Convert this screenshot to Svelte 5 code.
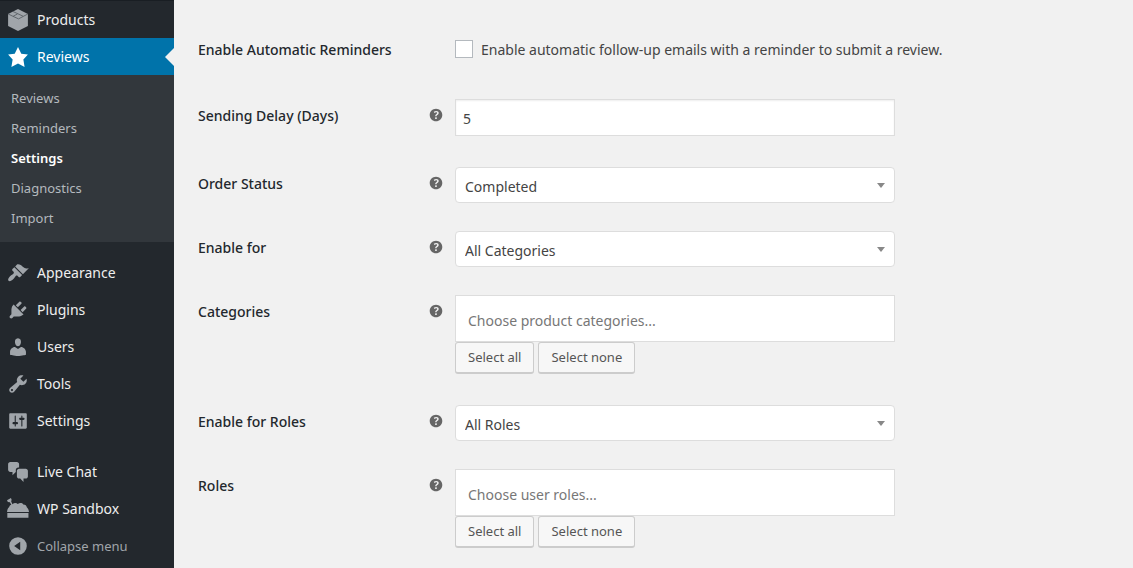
<script lang="ts">
	interface MenuItem {
		label: string;
		icon: string;
	}

	interface Field {
		id: string;
		label: string;
		type: 'number' | 'single' | 'multi';
		value?: string;
		placeholder?: string;
	}

	const icons: Record<string, string> = {
		box: 'M10 0l9 4.5v11L10 20l-9-4.500v-11z',
		star: 'M10 1l3 6 6 .75-4.12 4.620L16 19l-6-3-6 3 1.130-6.630L1 7.750 7 7z',
		appearance:
			'M14.48 11.06L7.41 3.99l1.5-1.5c.5-.56 2.3-.47 3.51.32 1.21.8 1.43 1.28 2.91 2.1 1.18.64 2.45 1.26 4.45.85zm-.71.71L6.7 4.7 4.93 6.47c-.39.39-.39 1.02 0 1.41l1.06 1.06c.39.39.39 1.03 0 1.42-.6.6-1.43 1.11-2.21 1.69-.35.26-.7.53-1.01.84C1.43 14.23.4 16.08 1.4 17.07c.99 1 2.84-.03 4.18-1.36.31-.31.58-.66.85-1.02.57-.78 1.08-1.61 1.69-2.21.39-.39 1.02-.39 1.41 0l1.06 1.06c.39.39 1.02.39 1.41 0z',
		plugins:
			'M13.11 4.36L9.87 7.6 8 5.73l3.24-3.24c.35-.34 1.05-.2 1.56.32.52.51.66 1.21.31 1.55zm-8 1.77l.91-1.12 9.01 9.01-1.19.84c-.71.71-2.63 1.16-3.82 1.16H6.14L4.9 17.26c-.59.59-1.54.59-2.12 0-.59-.58-.59-1.53 0-2.12l1.24-1.24v-3.88c0-1.13.4-3.19 1.09-3.89zm7.26 3.97l3.24-3.24c.34-.35 1.04-.21 1.55.31.52.51.66 1.21.31 1.55l-3.24 3.25z',
		users:
			'M10 9.25c-2.27 0-2.73-3.44-2.73-3.44C7 4.02 7.82 2 9.97 2c2.16 0 2.98 2.02 2.71 3.81 0 0-.41 3.44-2.68 3.44zm0 2.57L12.72 10c2.39 0 4.52 2.33 4.52 4.53v2.49s-3.65 1.13-7.24 1.13c-3.65 0-7.24-1.13-7.24-1.13v-2.49c0-2.25 1.94-4.48 4.47-4.48z',
		tools:
			'M16.68 9.77c-1.34 1.34-3.3 1.67-4.95.99l-5.41 6.52c-.99.99-2.59.99-3.58 0s-.99-2.59 0-3.57l6.52-5.42c-.68-1.65-.35-3.61.99-4.95 1.28-1.28 3.12-1.62 4.72-1.06l-2.89 2.89 2.82 2.82 2.86-2.87c.53 1.58.18 3.39-1.08 4.65zM3.81 16.21c.4.39 1.04.39 1.43 0 .4-.4.4-1.04 0-1.43-.39-.4-1.03-.4-1.43 0-.39.39-.39 1.03 0 1.43z',
		settings:
			'M18 16V4c0-.55-.45-1-1-1H3c-.55 0-1 .45-1 1v12c0 .55.45 1 1 1h14c.55 0 1-.45 1-1zM8 11h1c.55 0 1 .45 1 1s-.45 1-1 1H8v1.5c0 .28-.22.5-.5.5s-.5-.22-.5-.5V13H6c-.55 0-1-.45-1-1s.45-1 1-1h1V5.5c0-.28.22-.5.5-.5s.5.22.5.5V11zm5-2h-1c-.55 0-1-.45-1-1s.45-1 1-1h1V5.5c0-.28.22-.5.5-.5s.5.22.5.5V7h1c.55 0 1 .45 1 1s-.45 1-1 1h-1v5.5c0 .28-.22.5-.5.5s-.5-.22-.5-.5V9z',
		chat: 'M11 6h-.82C9.07 6 8 7.2 8 8.16V10l-3 3v-3H3c-1.1 0-2-.9-2-2V3c0-1.1.9-2 2-2h6c1.1 0 2 .9 2 2v3zm0 1h6c1.1 0 2 .9 2 2v5c0 1.1-.9 2-2 2h-2v3l-3-3h-1c-1.1 0-2-.9-2-2V9c0-1.1.9-2 2-2z',
		sandbox:
			'M0 2L3.600 0 4.200 1.500 3.800 3.200 5 5.600C6.200 4.400 8.500 4.200 9.800 5.400 11.500 4 13.800 4.200 14.800 5.800 16.800 5.800 17.800 7 18 8.500 19.200 9.500 19.800 11 20 12.700H0C.200 10.500.800 9 2 8.200 2.200 7.200 2.900 6.500 3.900 6.200L2.600 3.800 .800 3.600zM.300 13.600h19.200v4.400H.300z',
		collapse: 'M10 2a8 8 0 1 0 0 16 8 8 0 0 0 0-16zm2 4.200v7.600L6.500 10z',
		help: 'M17 10c0-3.87-3.14-7-7-7-3.87 0-7 3.13-7 7s3.13 7 7 7c3.86 0 7-3.13 7-7zm-6.3 1.48H9.14v-.43c0-.38.08-.7.24-.98s.46-.57.88-.89c.41-.29.68-.53.81-.71.14-.18.2-.39.2-.62 0-.25-.09-.44-.28-.58-.19-.13-.45-.19-.79-.19-.58 0-1.25.19-2 .57l-.64-1.28c.87-.49 1.8-.74 2.77-.74.81 0 1.45.2 1.92.58.48.39.71.91.71 1.55 0 .43-.09.8-.29 1.11-.19.32-.57.67-1.11 1.06-.38.28-.61.49-.71.63-.1.15-.15.34-.15.57v.35zm-1.47 2.74c-.18-.17-.27-.42-.27-.73 0-.33.08-.58.26-.75s.43-.25.77-.25c.32 0 .57.09.75.26s.27.42.27.74c0 .3-.09.55-.27.72-.18.18-.43.27-.75.27-.33 0-.58-.09-.76-.26z'
	};

	const submenu = ['Reviews', 'Reminders', 'Settings', 'Diagnostics', 'Import'];

	const siteMenu: MenuItem[] = [
		{ label: 'Appearance', icon: 'appearance' },
		{ label: 'Plugins', icon: 'plugins' },
		{ label: 'Users', icon: 'users' },
		{ label: 'Tools', icon: 'tools' },
		{ label: 'Settings', icon: 'settings' }
	];

	const extraMenu: MenuItem[] = [
		{ label: 'Live Chat', icon: 'chat' },
		{ label: 'WP Sandbox', icon: 'sandbox' }
	];

	const fields: Field[] = [
		{ id: 'delay', label: 'Sending Delay (Days)', type: 'number', value: '5' },
		{ id: 'order-status', label: 'Order Status', type: 'single', value: 'Completed' },
		{ id: 'enable-for', label: 'Enable for', type: 'single', value: 'All Categories' },
		{ id: 'categories', label: 'Categories', type: 'multi', placeholder: 'Choose product categories...' },
		{ id: 'enable-roles', label: 'Enable for Roles', type: 'single', value: 'All Roles' },
		{ id: 'roles', label: 'Roles', type: 'multi', placeholder: 'Choose user roles...' }
	];

	let reminders = $state(false);
</script>

{#snippet icon(name: string)}
	<svg class="icon" viewBox="0 0 20 20" aria-hidden="true">
		<path d={icons[name]} fill="currentColor" fill-rule="evenodd" />
		{#if name === 'box'}
			<path d="M1 4.500l4.500 2.200 5 2.300L19 4.500M5.500 2.300l9 4.200M5.500 6.700l4-2.200" fill="none" stroke="#50565b" stroke-width=".7" />
		{/if}
	</svg>
{/snippet}

{#snippet menuLink(item: MenuItem)}
	<li><a class="item" href="#{item.icon}">{@render icon(item.icon)}{item.label}</a></li>
{/snippet}

<div class="admin">
	<nav class="sidebar" aria-label="Main menu">
		<ul>
			{@render menuLink({ label: 'Products', icon: 'box' })}
			<li>
				<a class="item current" href="#reviews">{@render icon('star')}Reviews</a>
				<ul class="submenu">
					{#each submenu as label}
						<li><a href="#{label}" class:active={label === 'Settings'}>{label}</a></li>
					{/each}
				</ul>
			</li>
		</ul>
		<ul class="group">
			{#each siteMenu as item}
				{@render menuLink(item)}
			{/each}
		</ul>
		<ul class="group">
			{#each extraMenu as item}
				{@render menuLink(item)}
			{/each}
			<li>
				<button class="item collapse" type="button">{@render icon('collapse')}Collapse menu</button>
			</li>
		</ul>
	</nav>

	<main>
		<form>
			<div class="row toggle">
				<div class="heading"><span class="title">Enable Automatic Reminders</span></div>
				<label class="check">
					<input type="checkbox" bind:checked={reminders} />
					Enable automatic follow-up emails with a reminder to submit a review.
				</label>
			</div>

			{#each fields as field (field.id)}
				<div class="row {field.type}">
					<div class="heading">
						<label class="title" for={field.id}>{field.label}</label>
						<span class="help">{@render icon('help')}</span>
					</div>
					<div class="control">
						{#if field.type === 'number'}
							<input id={field.id} type="text" inputmode="numeric" value={field.value} />
						{:else if field.type === 'single'}
							<div class="select">
								<select id={field.id}>
									<option>{field.value}</option>
								</select>
							</div>
						{:else}
							<input id={field.id} class="tags" type="text" placeholder={field.placeholder} />
							<div class="buttons">
								<button type="button">Select all</button>
								<button type="button">Select none</button>
							</div>
						{/if}
					</div>
				</div>
			{/each}
		</form>
	</main>
</div>

<style>
	:global(body) {
		background: #f1f1f1;
	}

	.admin {
		display: flex;
		min-height: 100vh;
		font-family: 'Segoe UI', 'Noto Sans', 'Open Sans', sans-serif;
		font-size: 14px;
		line-height: 20px;
		color: #444;
	}

	.admin * {
		box-sizing: border-box;
	}

	.sidebar {
		flex: none;
		width: 174px;
		background: #23282d;
		border-top: 1px solid #191e23;
	}

	ul {
		list-style: none;
		margin: 0;
		padding: 0;
	}

	.group {
		margin-top: 12px;
	}

	.group + .group {
		margin-top: 14px;
	}

	.item {
		display: flex;
		align-items: center;
		gap: 8px;
		width: 100%;
		height: 37px;
		padding: 1px 7px 0;
		color: #eee;
		text-decoration: none;
	}

	.icon {
		flex: none;
		width: 22px;
		height: 22px;
		color: #a0a5aa;
	}

	.current {
		position: relative;
		background: #0073aa;
		color: #fff;
	}

	.current .icon {
		color: #fff;
	}

	/* notch that points from the content to the open section */
	.current::after {
		content: '';
		position: absolute;
		right: 0;
		top: 10px;
		border: 9px solid transparent;
		border-left-width: 0;
		border-right-color: #f1f1f1;
	}

	.submenu {
		padding: 8px 0 9px;
		background: #32373c;
		font-size: 13px;
	}

	.submenu a {
		display: block;
		padding: 5px 11px;
		color: #b4b9be;
		text-decoration: none;
	}

	.submenu .active {
		color: #fff;
		font-weight: 600;
	}

	.collapse {
		border: 0;
		background: none;
		font: inherit;
		font-size: 13px;
		color: #a0a5aa;
		cursor: pointer;
	}

	main {
		flex: 1;
		min-width: 0;
		padding: 26px 24px 0;
	}

	.row {
		display: grid;
		grid-template-columns: 257px minmax(0, 1fr);
		padding: 14px 0;
	}

	.row.number,
	.row.multi {
		padding-bottom: 17px;
	}

	.heading {
		display: flex;
		justify-content: space-between;
		align-items: flex-start;
		padding: 7px 10px 0 0;
	}

	.toggle .heading {
		padding-top: 0;
	}

	.title {
		font-weight: 500;
		color: #23282d;
	}

	.help .icon {
		display: block;
		width: 18px;
		height: 18px;
		color: #666;
	}

	.check {
		display: flex;
		align-items: flex-start;
		gap: 8px;
		min-height: 31px;
	}

	.check input {
		appearance: none;
		width: 18px;
		height: 18px;
		margin: 0;
		background: #fff;
		border: 1px solid #b4b9be;
	}

	.control {
		max-width: 440px;
	}

	.control input,
	.control select {
		display: block;
		width: 100%;
		height: 37px;
		margin: 0;
		padding: 2px 7px 0;
		border: 1px solid #ddd;
		background: #fff;
		font: inherit;
		color: #444;
	}

	.control input {
		box-shadow: inset 0 1px 2px rgba(0, 0, 0, 0.07);
	}

	.control .tags {
		height: 47px;
		padding: 4px 12px 0;
		box-shadow: none;
	}

	.tags::placeholder {
		color: #777;
		opacity: 1;
	}

	.select {
		position: relative;
	}

	.control select {
		appearance: none;
		height: 36px;
		padding: 3px 28px 0 9px;
		border-radius: 4px;
	}

	.select::after {
		content: '';
		position: absolute;
		right: 10px;
		top: 16px;
		border: 4px solid transparent;
		border-top: 5px solid #888;
		border-bottom: 0;
		pointer-events: none;
	}

	.buttons {
		display: flex;
		gap: 4px;
	}

	.buttons button {
		height: 32px;
		padding: 0 12px 2px;
		border: 1px solid #ccc;
		border-bottom-width: 2px;
		border-radius: 3px;
		background: #f7f7f7;
		font: inherit;
		font-size: 13px;
		color: #555;
	}
</style>
